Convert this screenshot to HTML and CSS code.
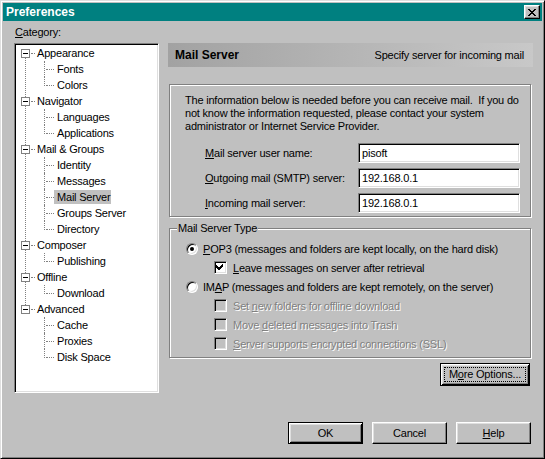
FILE: index.html
```html
<!DOCTYPE html>
<html lang="en">
  <head>
    <meta charset="UTF-8" />
    <title>Preferences</title>
    <link rel="stylesheet" href="styles.css">
  </head>
  <body>
    <div class="window">
      <!-- Title bar -->
      <div class="titlebar">
        <span class="title">Preferences</span>
        <button class="close" title="Close">
          <svg width="8" height="7" viewBox="0 0 8 7" shape-rendering="crispEdges">
            <path fill="#000" d="M0 0h2v1h-2z M6 0h2v1h-2z M1 1h2v1h-2z M5 1h2v1h-2z M2 2h4v1h-4z M3 3h2v1h-2z M2 4h4v1h-4z M1 5h2v1h-2z M5 5h2v1h-2z M0 6h2v1h-2z M6 6h2v1h-2z" />
          </svg>
        </button>
      </div>

      <div class="main">
        <!-- Category tree -->
        <div class="category">
          <div class="category-label"><u>C</u>ategory:</div>
          <div class="tree">
            <ul class="tree-root">
              <li class="group">
                <div class="node"><span class="toggle"></span><span class="name">Appearance</span></div>
                <ul class="children">
                  <li><span>Fonts</span></li>
                  <li><span>Colors</span></li>
                </ul>
              </li>
              <li class="group">
                <div class="node"><span class="toggle"></span><span class="name">Navigator</span></div>
                <ul class="children">
                  <li><span>Languages</span></li>
                  <li><span>Applications</span></li>
                </ul>
              </li>
              <li class="group">
                <div class="node"><span class="toggle"></span><span class="name">Mail &amp; Groups</span></div>
                <ul class="children">
                  <li><span>Identity</span></li>
                  <li><span>Messages</span></li>
                  <li class="selected"><span>Mail Server</span></li>
                  <li><span>Groups Server</span></li>
                  <li><span>Directory</span></li>
                </ul>
              </li>
              <li class="group">
                <div class="node"><span class="toggle"></span><span class="name">Composer</span></div>
                <ul class="children">
                  <li><span>Publishing</span></li>
                </ul>
              </li>
              <li class="group">
                <div class="node"><span class="toggle"></span><span class="name">Offline</span></div>
                <ul class="children">
                  <li><span>Download</span></li>
                </ul>
              </li>
              <li class="group">
                <div class="node"><span class="toggle"></span><span class="name">Advanced</span></div>
                <ul class="children">
                  <li><span>Cache</span></li>
                  <li><span>Proxies</span></li>
                  <li><span>Disk Space</span></li>
                </ul>
              </li>
            </ul>
          </div>
        </div>

        <!-- Mail server panel -->
        <div class="panel">
          <div class="panel-header">
            <span class="panel-title">Mail Server</span>
            <span class="panel-desc">Specify server for incoming mail</span>
          </div>

          <div class="group-box info">
            <p>
              The information below is needed before you can receive mail.&nbsp; If you do<br>
              not know the information requested, please contact your system<br>
              administrator or Internet Service Provider.
            </p>
            <div class="fields">
              <label><u>M</u>ail server user name:</label>
              <div class="textbox">pisoft</div>
              <label><u>O</u>utgoing mail (SMTP) server:</label>
              <div class="textbox">192.168.0.1</div>
              <label><u>I</u>ncoming mail server:</label>
              <div class="textbox">192.168.0.1</div>
            </div>
          </div>

          <div class="group-box server-type">
            <span class="legend">Mail Server Type</span>
            <div class="option">
              <span class="radio checked"></span>
              <span><u>P</u>OP3 (messages and folders are kept locally, on the hard disk)</span>
            </div>
            <div class="option sub">
              <span class="checkbox">
                <svg width="9" height="9" viewBox="0 0 9 9" shape-rendering="crispEdges">
                  <path fill="#000" d="M6 1h1v1h-1z M5 2h2v1h-2z M0 2h1v1h-1z M4 3h3v1h-3z M0 3h2v1h-2z M0 4h6v1h-6z M1 5h4v1h-4z M2 6h2v1h-2z" />
                </svg>
              </span>
              <span><u>L</u>eave messages on server after retrieval</span>
            </div>
            <div class="option">
              <span class="radio"></span>
              <span>IM<u>A</u>P (messages and folders are kept remotely, on the server)</span>
            </div>
            <div class="option sub disabled">
              <span class="checkbox"></span>
              <span>Set <u>n</u>ew folders for offline download</span>
            </div>
            <div class="option sub disabled">
              <span class="checkbox"></span>
              <span>Move <u>d</u>eleted messages into Trash</span>
            </div>
            <div class="option sub disabled">
              <span class="checkbox"></span>
              <span><u>S</u>erver supports encrypted connections (SSL)</span>
            </div>
          </div>

          <div class="more-row">
            <button class="btn default focused more"><span>M<u>o</u>re Options...</span></button>
          </div>
        </div>
      </div>

      <!-- Dialog buttons -->
      <div class="footer">
        <button class="btn default">OK</button>
        <button class="btn">Cancel</button>
        <button class="btn"><u>H</u>elp</button>
      </div>
    </div>
  </body>
</html>
```

FILE: styles.css
```css
* {
  margin: 0;
  padding: 0;
  box-sizing: border-box;
}

body {
  font-family: "Liberation Sans", Arial, sans-serif;
  font-size: 11px;
  letter-spacing: -0.2px;
  color: #000;
  background-color: #c0c0c0;
}

u {
  text-decoration: underline;
}

/* Window frame */
.window {
  width: 545px;
  height: 459px;
  background-color: #c0c0c0;
  border: 1px solid;
  border-color: #dfdfdf #000 #000 #dfdfdf;
  box-shadow: inset 1px 1px #fff, inset -1px -1px #808080;
  padding: 2px;
}

.titlebar {
  height: 18px;
  background-color: #008080;
  color: #fff;
  display: flex;
  align-items: center;
  justify-content: space-between;
  padding: 0 2px 0 3px;
}

.title {
  font-size: 12px;
  font-weight: bold;
  letter-spacing: 0;
}

.close {
  width: 16px;
  height: 14px;
  display: flex;
  align-items: center;
  justify-content: center;
  background-color: #c0c0c0;
  border: 1px solid;
  border-color: #fff #000 #000 #fff;
  box-shadow: inset -1px -1px #808080, inset 1px 1px #dfdfdf;
}

.main {
  display: flex;
  gap: 9px;
  padding: 5px 0 0 11px;
}

/* Category tree */
.category-label {
  line-height: 13px;
  padding-left: 1px;
  margin-bottom: 4px;
}

.tree {
  width: 145px;
  height: 350px;
  background-color: #fff;
  border: 1px solid;
  border-color: #808080 #fff #fff #808080;
  box-shadow: inset 1px 1px #000, inset -1px -1px #dfdfdf;
  padding: 1px;
}

.tree ul {
  list-style: none;
}

.group {
  position: relative;
}

/* vertical line joining the top level boxes */
.group:not(:last-child)::before {
  content: "";
  position: absolute;
  left: 9px;
  top: 13px;
  bottom: -4px;
  border-left: 1px dotted #808080;
}

.node {
  height: 16px;
  display: flex;
  align-items: flex-start;
  padding-left: 5px;
}

.toggle {
  flex: none;
  width: 9px;
  height: 9px;
  margin-top: 4px;
  margin-right: 7px;
  border: 1px solid #808080;
  background-color: #fff;
  position: relative;
}

.toggle::after {
  content: "";
  position: absolute;
  left: 1px;
  top: 3px;
  width: 5px;
  height: 1px;
  background-color: #000;
}

.name {
  line-height: 16px;
  position: relative;
}

.name::before {
  content: "";
  position: absolute;
  left: -6px;
  top: 8px;
  width: 4px;
  border-top: 1px dotted #808080;
}

.children li {
  height: 16px;
  line-height: 16px;
  padding-left: 41px;
  position: relative;
}

.children li::before {
  content: "";
  position: absolute;
  left: 28px;
  top: 0;
  height: 16px;
  border-left: 1px dotted #808080;
}

.children li:last-child::before {
  height: 9px;
}

.children li::after {
  content: "";
  position: absolute;
  left: 30px;
  top: 8px;
  width: 8px;
  border-top: 1px dotted #808080;
}

.children li.selected span {
  display: inline-block;
  line-height: 14px;
  background-color: #c0c0c0;
  margin-left: -3px;
  padding: 0 1px 0 3px;
}

/* Right panel */
.panel {
  width: 365px;
  padding-top: 17px;
}

.panel-header {
  height: 24px;
  display: flex;
  align-items: center;
  justify-content: space-between;
  padding: 0 9px 0 7px;
  background: linear-gradient(to right, #a2a2a2, #c8c8c8);
}

.panel-title {
  font-size: 12px;
  font-weight: bold;
  letter-spacing: 0;
}

.group-box {
  width: 362px;
  margin-left: 1px;
  border: 1px solid #808080;
  box-shadow: inset 1px 1px #fff, 1px 1px #fff;
}

.info {
  margin-top: 17px;
  height: 133px;
  padding: 9px 0 0 15px;
}

.info p {
  line-height: 13px;
  white-space: nowrap;
}

.fields {
  display: grid;
  grid-template-columns: 153px 162px;
  grid-auto-rows: 20px;
  row-gap: 5px;
  align-items: center;
  margin-top: 10px;
  padding-left: 20px;
}

.textbox {
  height: 20px;
  line-height: 18px;
  padding: 0 3px;
  background-color: #fff;
  border: 1px solid;
  border-color: #808080 #fff #fff #808080;
  box-shadow: inset 1px 1px #000, inset -1px -1px #dfdfdf;
}

.server-type {
  position: relative;
  margin-top: 11px;
  height: 130px;
  padding: 10px 0 0 16px;
}

.legend {
  position: absolute;
  top: -7px;
  left: 7px;
  padding: 0 1px;
  line-height: 13px;
  background-color: #c0c0c0;
}

.option {
  height: 19px;
  display: flex;
  align-items: center;
  white-space: nowrap;
}

.option.sub {
  padding-left: 28px;
}

.radio {
  flex: none;
  width: 12px;
  height: 12px;
  margin-right: 5px;
  border-radius: 50%;
  background-color: #fff;
  border: 1px solid;
  border-color: #808080 #fff #fff #808080;
  box-shadow: inset 1px 1px #000, inset -1px -1px #dfdfdf;
  display: flex;
  align-items: center;
  justify-content: center;
}

.radio.checked::after {
  content: "";
  width: 4px;
  height: 4px;
  border-radius: 50%;
  background-color: #000;
}

.checkbox {
  flex: none;
  width: 13px;
  height: 13px;
  margin-right: 6px;
  background-color: #fff;
  border: 1px solid;
  border-color: #808080 #fff #fff #808080;
  box-shadow: inset 1px 1px #000, inset -1px -1px #dfdfdf;
  display: flex;
  align-items: center;
  justify-content: center;
}

.disabled {
  color: #808080;
  text-shadow: 1px 1px #fff;
}

.disabled .checkbox {
  background-color: #c0c0c0;
}

.more-row {
  display: flex;
  justify-content: flex-end;
  margin-top: 5px;
  padding-right: 3px;
}

/* Push buttons */
.btn {
  width: 75px;
  height: 22px;
  font: inherit;
  letter-spacing: inherit;
  color: #000;
  background-color: #c0c0c0;
  border: 1px solid;
  border-color: #fff #000 #000 #fff;
  box-shadow: inset -1px -1px #808080, inset 1px 1px #dfdfdf;
}

.btn.default {
  border-color: #000;
  box-shadow: inset 1px 1px #fff, inset -1px -1px #000, inset 2px 2px #dfdfdf, inset -2px -2px #808080;
}

.btn.more {
  width: 90px;
  height: 23px;
  padding: 3px;
}

.btn.focused span {
  display: block;
  height: 100%;
  line-height: 13px;
  border: 1px dotted #000;
}

.footer {
  display: flex;
  justify-content: flex-end;
  gap: 9px;
  margin-top: 29px;
  padding-right: 11px;
}
```
